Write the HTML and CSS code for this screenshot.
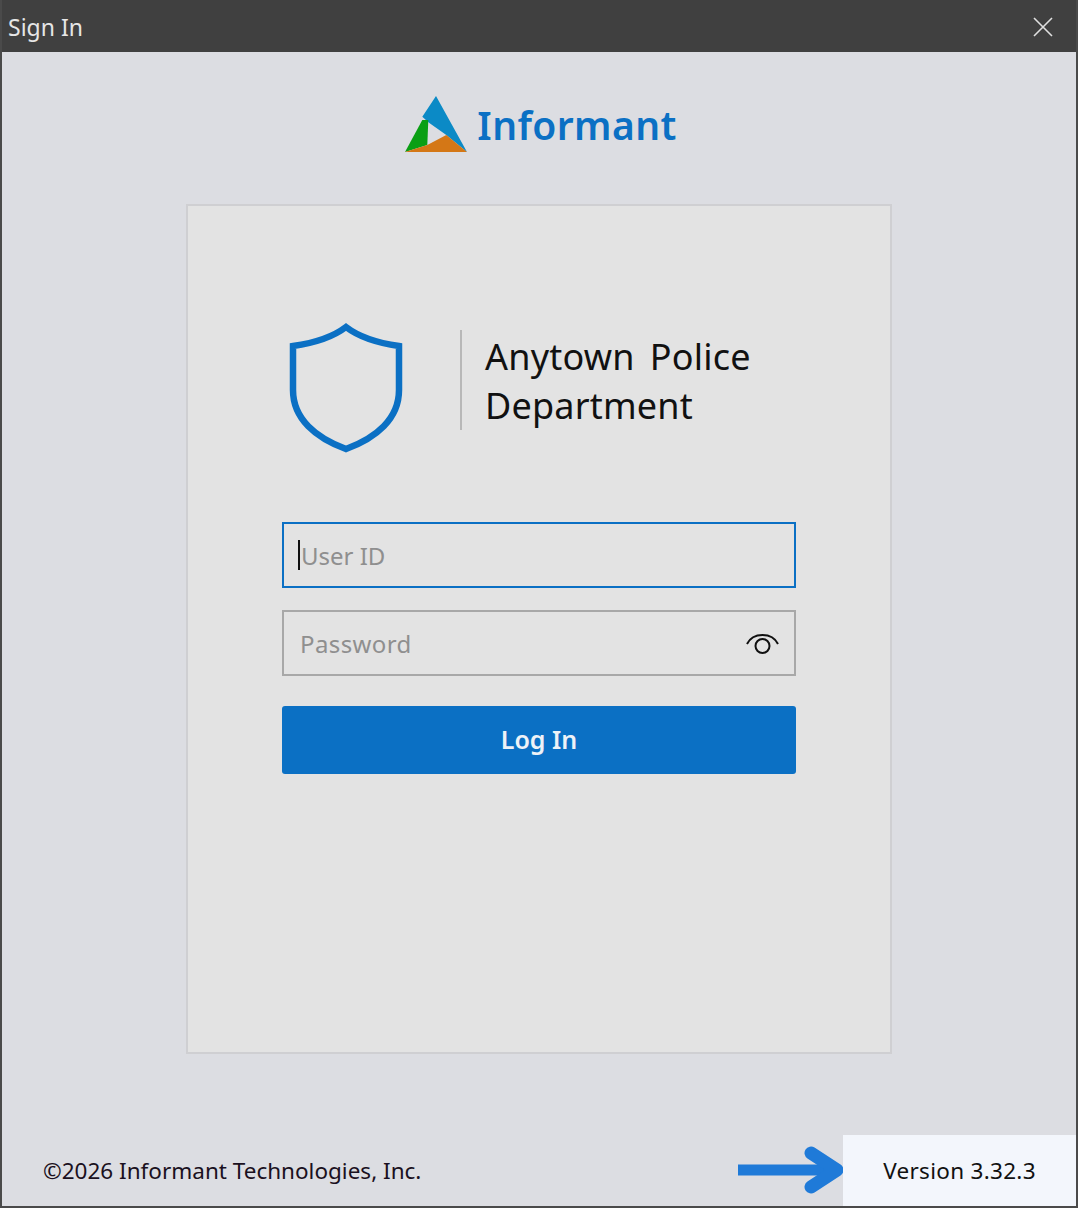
FILE: index.html
```html
<!DOCTYPE html>
<html lang="en">
<head>
    <meta charset="UTF-8">
    <meta name="viewport" content="width=device-width, initial-scale=1.0">
    <title>Sign In</title>
    <link rel="stylesheet" href="styles.css">
</head>
<body>
    <div class="window">
        <div class="title-bar">
            <span class="title-text">Sign In</span>
            <svg class="close-icon" width="20" height="20" viewBox="0 0 20 20">
                <path d="M1 1L19 19M19 1L1 19" stroke="#e0e0e0" stroke-width="1.6" fill="none"/>
            </svg>
        </div>
        <div class="content">
            <div class="brand">
                <svg class="brand-logo" width="64" height="58" viewBox="0 0 64 58">
                    <polygon points="32,0 63,56 42.3,39 25,26.7 18.3,20.7" fill="#0b8ac6"/>
                    <polygon points="18.3,24 24.3,24 23.3,49 1,56" fill="#0a9f14"/>
                    <polygon points="1,56 23.3,49 42.3,39 63,56" fill="#d47716"/>
                </svg>
                <span class="brand-name">Informant</span>
            </div>
            <div class="card">
                <div class="agency">
                    <svg class="shield" width="116" height="132" viewBox="0 0 116 132">
                        <path d="M58 5C45 15 26 21 5 24V68C5 97 28 116 58 127C88 116 111 97 111 68V24C90 21 71 15 58 5Z" fill="none" stroke="#0b70c4" stroke-width="6.500"/>
                    </svg>
                    <div class="agency-name">Anytown Police<br>Department</div>
                </div>
                <div class="field field-active">
                    <span class="caret"></span>
                    <span class="placeholder">User ID</span>
                </div>
                <div class="field">
                    <span class="placeholder password">Password</span>
                    <svg class="eye" width="34" height="24" viewBox="0 0 34 24">
                        <path d="M1 13C7 1 26 1 32 13" fill="none" stroke="#111" stroke-width="2"/>
                        <circle cx="16.500" cy="15" r="7" fill="none" stroke="#111" stroke-width="2"/>
                    </svg>
                </div>
                <button class="login-btn" type="button">Log In</button>
            </div>
            <div class="footer">
                <span class="copyright">©2026 Informant Technologies, Inc.</span>
                <div class="footer-right">
                    <svg class="arrow" width="105" height="50" viewBox="0 0 105 50">
                        <path d="M0 25H100" stroke="#1f7ad8" stroke-width="11" fill="none"/>
                        <path d="M73 8L99 25L73 42" stroke="#1f7ad8" stroke-width="13" stroke-linecap="round" stroke-linejoin="round" fill="none"/>
                    </svg>
                    <div class="version">Version 3.32.3</div>
                </div>
            </div>
        </div>
    </div>
</body>
</html>
```

FILE: styles.css
```css
html, body {
    margin: 0;
    height: 100%;
}
body {
    font-family: "Noto Sans", "Open Sans", sans-serif;
    background-color: #dcdde2;
    overflow: hidden;
}
.window {
    box-sizing: border-box;
    width: 1078px;
    height: 1208px;
    border: 2px solid #4a4a4a;
    display: flex;
    flex-direction: column;
}
.title-bar {
    height: 50px;
    flex: none;
    margin-top: -2px;
    padding-top: 2px;
    background-color: #404040;
    color: #e6e6e6;
    display: flex;
    align-items: center;
    justify-content: space-between;
    padding-left: 6px;
    padding-right: 23px;
    font-size: 23px;
}
.content {
    flex: 1;
    background-color: #dcdde2;
    display: flex;
    flex-direction: column;
    align-items: center;
}
.brand {
    display: flex;
    align-items: center;
    gap: 9px;
    margin-top: 44px;
    margin-left: 3px;
    height: 58px;
}
.brand-name {
    color: #0b70c4;
    font-size: 39px;
    font-weight: 600;
    letter-spacing: 0.4px;
    padding-bottom: 2px;
}
.card {
    box-sizing: border-box;
    width: 706px;
    height: 850px;
    margin-top: 50px;
    background-color: #e3e3e3;
    border: 2px solid #cfcfd2;
    padding: 116px 94px 0;
    display: flex;
    flex-direction: column;
}
.agency {
    display: flex;
    align-items: flex-start;
    height: 135px;
}
.shield {
    margin-left: 6px;
    flex: none;
}
.agency-name {
    margin-left: 56px;
    margin-top: 8px;
    border-left: 2px solid #b8b8b8;
    padding-top: 2px;
    padding-left: 23px;
    font-size: 36px;
    letter-spacing: 0.2px;
    word-spacing: 5.6px;
    line-height: 49px;
    color: #111;
}
.field {
    box-sizing: border-box;
    height: 66px;
    margin-top: 22px;
    border: 2px solid #a8a8a8;
    display: flex;
    align-items: center;
    justify-content: space-between;
    padding: 0 14px 0 16px;
    font-size: 24px;
    color: #8f8f8f;
}
.field-active {
    margin-top: 65px;
    border-color: #0b70c4;
    justify-content: flex-start;
    padding-left: 14px;
}
.password {
    letter-spacing: 0.4px;
}
.caret {
    width: 2px;
    height: 30px;
    background-color: #111;
    margin-right: 1px;
}
.login-btn {
    height: 68px;
    margin-top: 30px;
    padding-bottom: 4px;
    border: none;
    border-radius: 3px;
    background-color: #0b70c4;
    color: #eef2f7;
    font-family: inherit;
    font-size: 25px;
    font-weight: 600;
}
.footer {
    align-self: stretch;
    margin-top: auto;
    display: flex;
    align-items: center;
    justify-content: space-between;
    height: 71px;
    padding-left: 41px;
    font-size: 22.5px;
    color: #1a1020;
}
.footer-right {
    display: flex;
    align-items: center;
    height: 100%;
}
.arrow {
    margin-bottom: 2px;
}
.version {
    box-sizing: border-box;
    width: 233px;
    height: 100%;
    background-color: #f3f6fc;
    display: flex;
    align-items: center;
    justify-content: center;
    letter-spacing: 0.3px;
    color: #111;
}
```
